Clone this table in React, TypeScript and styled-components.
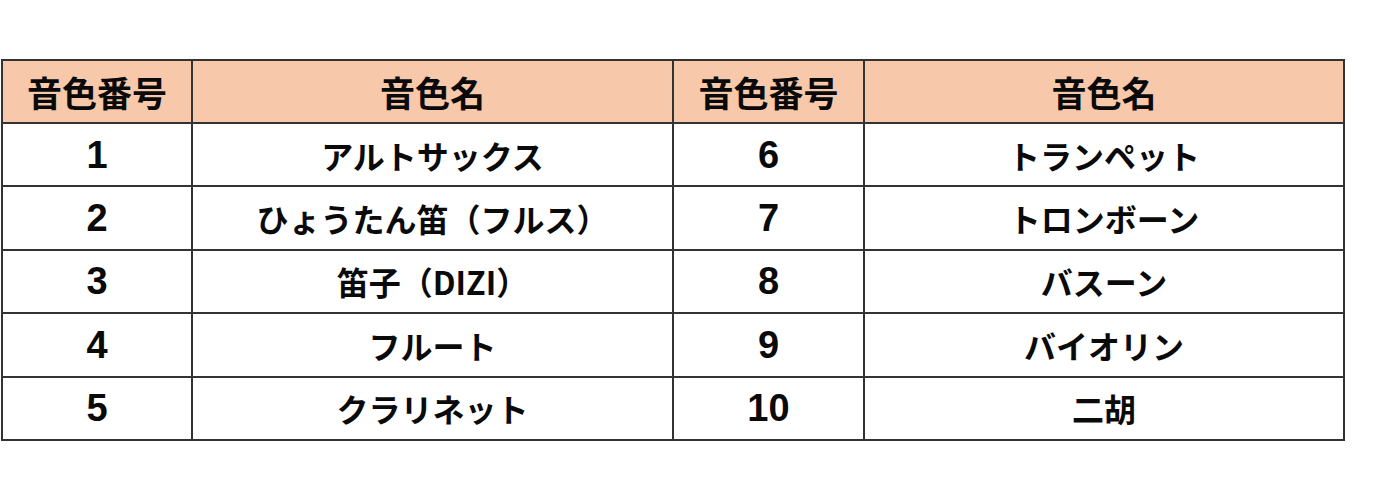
import React from 'react';
import styled, { createGlobalStyle } from 'styled-components';

const GlobalStyle = createGlobalStyle`
  body {
    margin: 0;
    background: #ffffff;
    font-family: "Noto Sans CJK JP", "Noto Sans", sans-serif;
  }
`;

const Page = styled.div`
  padding: 59px 0 0 1px;
`;

const Table = styled.table`
  width: 1343px;
  border-collapse: collapse;
  table-layout: fixed;
`;

const HeadCell = styled.th<{ $w: number }>`
  width: ${(p) => p.$w}px;
  height: 61px;
  padding: 0;
  background: #f7c8aa;
  border: 2px solid #333333;
  font-size: 35px;
  font-weight: 700;
  color: #0a0a0a;
  text-align: center;
  vertical-align: middle;
`;

const Cell = styled.td<{ $num?: boolean }>`
  height: 61.4px;
  padding: 0;
  border: 2px solid #333333;
  text-align: center;
  vertical-align: middle;
  color: #0a0a0a;
  font-family: ${(p) =>
    p.$num
      ? '"Liberation Sans", Arial, sans-serif'
      : '"Noto Sans CJK JP", "Noto Sans", sans-serif'};
  font-size: ${(p) => (p.$num ? '38px' : '32px')};
  font-weight: 700;
  line-height: 1;
`;

const rows: [number, string, number, string][] = [
  [1, 'アルトサックス', 6, 'トランペット'],
  [2, 'ひょうたん笛（フルス）', 7, 'トロンボーン'],
  [3, '笛子（DIZI）', 8, 'バスーン'],
  [4, 'フルート', 9, 'バイオリン'],
  [5, 'クラリネット', 10, '二胡'],
];

const App: React.FC = () => {
  return (
    <Page>
      <GlobalStyle />
      <Table>
        <thead>
          <tr>
            <HeadCell $w={188}>音色番号</HeadCell>
            <HeadCell $w={479}>音色名</HeadCell>
            <HeadCell $w={189}>音色番号</HeadCell>
            <HeadCell $w={478}>音色名</HeadCell>
          </tr>
        </thead>
        <tbody>
          {rows.map(([n1, name1, n2, name2]) => (
            <tr key={n1}>
              <Cell $num>{n1}</Cell>
              <Cell>{name1}</Cell>
              <Cell $num>{n2}</Cell>
              <Cell>{name2}</Cell>
            </tr>
          ))}
        </tbody>
      </Table>
    </Page>
  );
};

export default App;
